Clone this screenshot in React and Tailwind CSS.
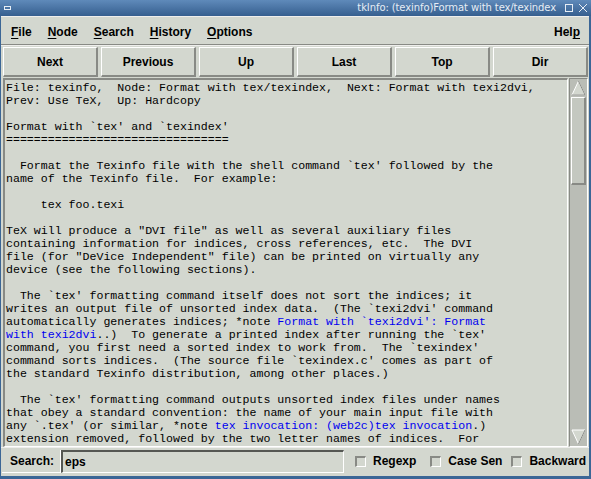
import React from "react";

const BG = "bg-[#d3d7cf]";

function U({ children }) {
  return <span className="underline underline-offset-[2px] decoration-1">{children}</span>;
}

function Btn({ children }) {
  return (
    <div className="flex-1 h-[30px] flex items-center justify-center border-t border-l border-t-white border-l-white border-b-2 border-r-2 border-b-[#888a85] border-r-[#888a85] text-[12px] font-bold text-black">
      {children}
    </div>
  );
}

function Check({ label }) {
  return (
    <div className="flex items-center gap-[7px]">
      <div className="w-[11px] h-[11px] border-t-2 border-l-2 border-t-[#888a85] border-l-[#888a85] border-b border-r border-b-white border-r-white bg-[#d3d7cf]" />
      <span className="text-[12px] font-bold">{label}</span>
    </div>
  );
}

const L = "text-[#0000f0]";

export default function App() {
  return (
    <div
      className="w-[591px] h-[479px] bg-[#3b6696] flex flex-col overflow-hidden"
      style={{ fontFamily: '"Liberation Sans", Arial, sans-serif' }}
    >
      {/* title bar */}
      <div className="h-[16px] shrink-0 bg-gradient-to-b from-[#5f8aba] to-[#365f8f] flex items-center relative">
        <div className="ml-[4px] w-[7px] h-[4px] border border-[#e8eef5]" />
        <div className="flex-1" />
        <span
          className="text-[10px] text-[#e6edf5] leading-none mr-[9px]"
          style={{ fontFamily: '"DejaVu Sans", sans-serif', letterSpacing: "-0.1px" }}
        >
          tkInfo: (texinfo)Format with tex/texindex
        </span>
        <div className="w-[8px] h-[8px] border border-[#e6edf5] mr-[5px]" />
        <svg width="10" height="10" viewBox="0 0 10 10" className="mr-[3px]">
          <path d="M1 1 L9 9 M9 1 L1 9" stroke="#e6edf5" strokeWidth="1" />
        </svg>
      </div>

      <div className={`flex-1 ml-[1px] mr-[2px] ${BG} flex flex-col border-t border-t-[#eeeeec]`}>
        {/* menubar */}
        <div className="h-[28px] shrink-0 flex items-center text-[12px] font-bold border-b border-b-[#888a85] pl-[10px] pr-[9px] pt-[3px]">
          <span className="mr-[16px]"><U>F</U>ile</span>
          <span className="mr-[16px]"><U>N</U>ode</span>
          <span className="mr-[16px]"><U>S</U>earch</span>
          <span className="mr-[16px]"><U>H</U>istory</span>
          <span><U>O</U>ptions</span>
          <span className="ml-auto">Hel<U>p</U></span>
        </div>

        {/* buttons */}
        <div className="flex gap-[3px] pl-[2px] pr-[1px] pt-[1px] pb-[1px] border-t border-t-[#eeeeec]">
          <Btn>Next</Btn>
          <Btn>Previous</Btn>
          <Btn>Up</Btn>
          <Btn>Last</Btn>
          <Btn>Top</Btn>
          <Btn>Dir</Btn>
        </div>

        {/* text area + scrollbar */}
        <div className="flex-1 flex pl-[2px] pr-[1px] min-h-0">
          <div className="flex-1 border-t-2 border-l-2 border-t-[#888a85] border-l-[#888a85] border-b border-r border-b-white border-r-white overflow-hidden">
            <pre
              className="text-[11.6px] leading-[13px] text-black pl-[1px] pt-[1px] m-0"
              style={{ fontFamily: '"Liberation Mono", "Courier New", monospace' }}
            >
{`File: texinfo,  Node: Format with tex/texindex,  Next: Format with texi2dvi,
Prev: Use TeX,  Up: Hardcopy

Format with \`tex' and \`texindex'
================================

  Format the Texinfo file with the shell command \`tex' followed by the
name of the Texinfo file.  For example:

     tex foo.texi

TeX will produce a "DVI file" as well as several auxiliary files
containing information for indices, cross references, etc.  The DVI
file (for "DeVice Independent" file) can be printed on virtually any
device (see the following sections).

  The \`tex' formatting command itself does not sort the indices; it
writes an output file of unsorted index data.  (The \`texi2dvi' command
automatically generates indices; *note `}<span className={L}>{`Format with \`texi2dvi': Format
with texi2dvi`}</span>{`..)  To generate a printed index after running the \`tex'
command, you first need a sorted index to work from.  The \`texindex'
command sorts indices.  (The source file \`texindex.c' comes as part of
the standard Texinfo distribution, among other places.)

  The \`tex' formatting command outputs unsorted index files under names
that obey a standard convention: the name of your main input file with
any \`.tex' (or similar, *note `}<span className={L}>{`tex invocation: (web2c)tex invocation`}</span>{`.)
extension removed, followed by the two letter names of indices.  For
`}
            </pre>
          </div>
          {/* scrollbar */}
          <div className="w-[19px] ml-[1px] bg-[#babdb6] border-t border-l border-t-[#888a85] border-l-[#888a85] border-b border-r border-b-white border-r-white flex flex-col">
            <svg width="17" height="18" viewBox="0 0 17 18" className="shrink-0">
              <path d="M8.5 2 L15 16 L2 16 Z" fill="#d3d7cf" stroke="#ffffff" strokeWidth="1" />
              <path d="M15 16 L2 16" stroke="#888a85" strokeWidth="1" />
              <path d="M8.5 2 L15 16" stroke="#888a85" strokeWidth="1" />
            </svg>
            <div className="mx-[1px] h-[88px] bg-[#c4c8c0] border-t border-l border-t-white border-l-white border-b-2 border-r-2 border-b-[#888a85] border-r-[#888a85]" />
            <div className="flex-1" />
            <svg width="17" height="18" viewBox="0 0 17 18" className="shrink-0">
              <path d="M2 2 L15 2 L8.5 16 Z" fill="#d3d7cf" stroke="#ffffff" strokeWidth="1" />
              <path d="M15 2 L8.5 16" stroke="#888a85" strokeWidth="1" />
            </svg>
          </div>
        </div>

        {/* search row */}
        <div className="h-[26px] shrink-0 flex items-center pl-[1px] pr-[1px] pt-[1px] border-t border-t-[#eeeeec]">
          <div className="h-[23px] w-[59px] flex items-center pl-[8px] text-[12px] font-bold border-b border-r border-b-white border-r-white">
            Search:
          </div>
          <div className="h-[23px] w-[283px] flex items-center pl-[2px] text-[12px] font-bold border-t-2 border-l-2 border-t-[#555753] border-l-[#555753] border-b border-r border-b-white border-r-white">
            eps
          </div>
          <div className="flex items-center ml-[11px] gap-[14px]">
            <Check label="Regexp" />
            <Check label="Case Sen" />
          </div>
          <div className="ml-[9px]">
            <Check label="Backward" />
          </div>
        </div>
        <div className="h-[3px] shrink-0" />
      </div>
      <div className="h-[3px] shrink-0 bg-[#3b6696]" />
    </div>
  );
}
